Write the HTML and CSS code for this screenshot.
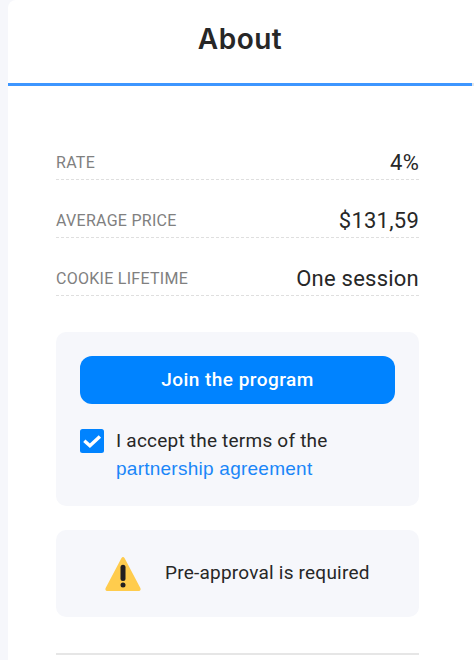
FILE: index.html
```html
<!DOCTYPE html>
<html lang="en">
<head>
<meta charset="utf-8">
<title>About</title>
<link rel="stylesheet" href="styles.css">
</head>
<body>
<main class="card">
  <header class="tabs"><h1 class="title">About</h1></header>
  <section class="content">
    <dl class="facts">
      <div class="fact"><dt>RATE</dt><dd>4%</dd></div>
      <div class="fact"><dt>AVERAGE PRICE</dt><dd>$131,59</dd></div>
      <div class="fact"><dt>COOKIE LIFETIME</dt><dd>One session</dd></div>
    </dl>
    <div class="panel join">
      <button class="button" type="button">Join the program</button>
      <div class="terms">
        <svg class="checkbox" viewBox="0 0 24 24"><rect width="24" height="24" rx="2.5" fill="#0083ff"/><path d="M4.3 11.8l5.6 5 10-9.4" fill="none" stroke="#fff" stroke-width="3.4"/></svg>
        <p class="terms-text">I accept the terms of the<br><a class="link">partnership agreement</a></p>
      </div>
    </div>
    <div class="panel notice">
      <svg class="warning" viewBox="0 0 36 36"><path d="M2.65 35C.64 35-.19 33.53.8 31.74L16.35 2.34C17.34.55 18.66.55 19.65 2.34L35.2 31.74C36.19 33.53 35.36 35 33.35 35Z" fill="#ffcc4d"/><rect x="15.5" y="8.7" width="5" height="16.3" rx="2.5" fill="#231f20"/><circle cx="18" cy="29" r="2.5" fill="#231f20"/></svg>
      <span class="notice-text">Pre-approval is required</span>
    </div>
    <hr class="divider">
  </section>
</main>
</body>
</html>
```

FILE: styles.css
```css
* { box-sizing: border-box; }
body {
  margin: 0;
  height: 660px;
  padding-left: 8px;
  overflow: hidden;
  background: #f6f7fb;
  color: #272727;
  font-family: Roboto, "Liberation Sans", sans-serif;
}
.card {
  height: 660px;
  background: #fff;
  border-top-left-radius: 8px;
}
.tabs {
  height: 86px;
  border-bottom: 3px solid transparent;
  background:
    linear-gradient(#3d96ff, #3d96ff) left bottom / 464px 3px no-repeat border-box,
    linear-gradient(#e5e5e5, #e5e5e5) left bottom / 100% 3px no-repeat border-box;
}
.title {
  margin: 0;
  width: 464px;
  font-family: Inter, Roboto, sans-serif;
  font-size: 28px;
  font-weight: 600;
  line-height: 79px;
  letter-spacing: 0.5px;
  text-align: center;
}
.content { padding: 58px 0 0 48px; width: 411px; }
.facts { margin: 0; }
.fact {
  display: flex;
  justify-content: space-between;
  height: 36px;
  margin-bottom: 22px;
  border-bottom: 1px dashed #dfdfdf;
  line-height: 37px;
}
dt { color: #808080; font-size: 16px; letter-spacing: 0.28px; }
dd { margin: 0; font-size: 22px; letter-spacing: 0.24px; }
.panel { border-radius: 10px; background: #f6f7fb; }
.join { height: 174px; margin-top: 36px; padding: 24px; }
.button {
  display: block;
  width: 100%;
  height: 48px;
  padding: 0;
  border: 0;
  border-radius: 12px;
  background: #0083ff;
  color: #fff;
  font: 500 19px/48px Roboto, sans-serif;
  letter-spacing: 0.45px;
}
.terms { display: flex; gap: 12px; margin-top: 23px; }
.checkbox { flex: none; width: 24px; height: 24px; margin-top: 2px; }
.terms-text { margin: 0; font-size: 19px; line-height: 28px; letter-spacing: 0.22px; }
.link { color: #1a86f8; font-family: "Liberation Sans", sans-serif; letter-spacing: 0.25px; }
.notice {
  display: flex;
  align-items: center;
  height: 87px;
  margin-top: 24px;
  padding-left: 49px;
}
.warning { width: 36px; height: 36px; margin-right: 24px; }
.notice-text { padding-bottom: 2px; font-size: 19px; letter-spacing: 0.22px; }
.divider { margin: 36px 0 0; height: 2px; border: 0; background: #e6e6e6; }
```
